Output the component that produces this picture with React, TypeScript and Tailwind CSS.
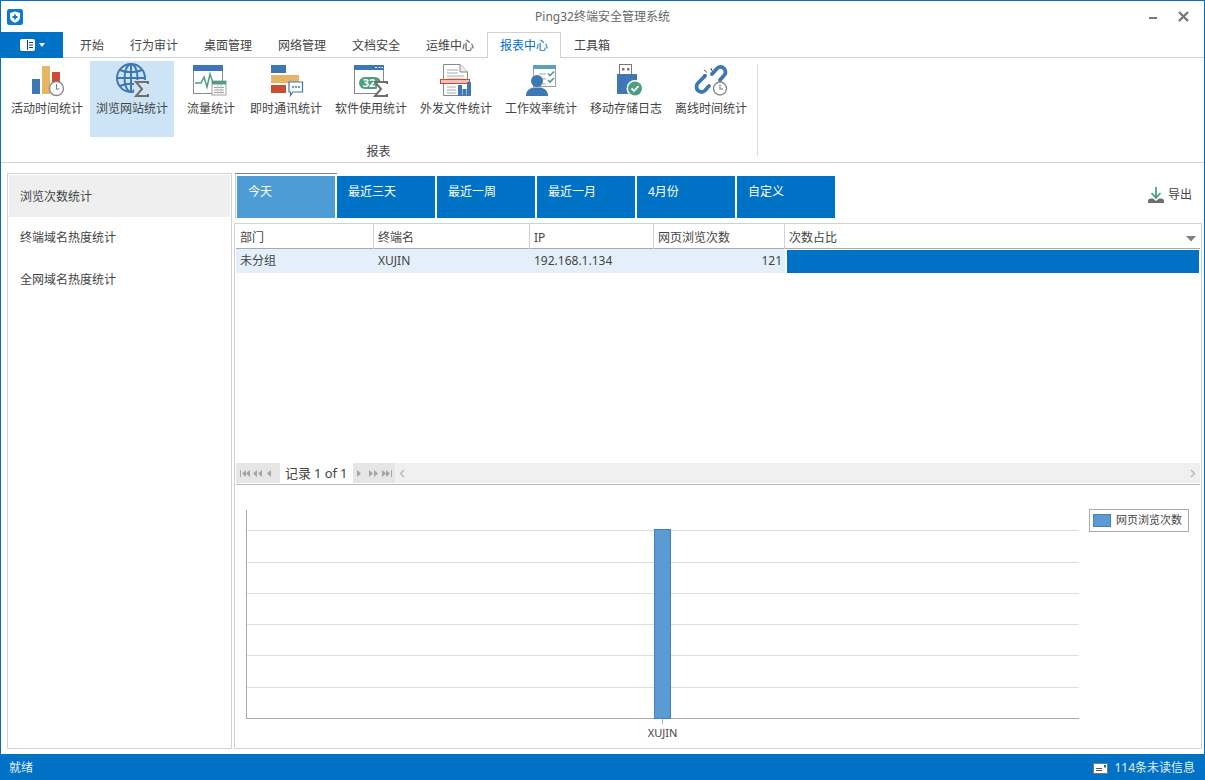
import type { ReactNode } from 'react'

const FONT = "font-['Noto_Sans','Noto_Sans_CJK_SC',sans-serif]"

const menuTabs = [
  { label: '开始', width: 'w-[50px]' },
  { label: '行为审计', width: 'w-[74px]' },
  { label: '桌面管理', width: 'w-[74px]' },
  { label: '网络管理', width: 'w-[74px]' },
  { label: '文档安全', width: 'w-[74px]' },
  { label: '运维中心', width: 'w-[74px]' }
]

function Sigma({ x, y }: { x: number; y: number }): React.JSX.Element {
  return (
    <path
      d={`M${x + 12} ${y + 2}V${y}H${x}L${x + 6} ${y + 7}L${x} ${y + 14}H${x + 12}V${y + 12}`}
      fill="none"
      stroke="#6e6e6e"
      strokeWidth="2"
    />
  )
}

function Clock({ cx, cy, r }: { cx: number; cy: number; r: number }): React.JSX.Element {
  return (
    <g>
      <circle cx={cx} cy={cy} r={r} fill="#fff" stroke="#8a8a8a" strokeWidth="1.4" />
      <path d={`M${cx} ${cy - r + 2.5}V${cy + 0.5}H${cx + 3}`} fill="none" stroke="#6e7f8f" strokeWidth="1.1" />
    </g>
  )
}

const icons: Record<string, ReactNode> = {
  activity: (
    <>
      <rect x="5" y="16" width="8" height="15" fill="#3d78b4" />
      <rect x="15" y="3" width="8" height="28" fill="#e8b565" />
      <rect x="25" y="9" width="8" height="14" fill="#cb4c30" />
      <Clock cx={29.5} cy={25.5} r={7} />
    </>
  ),
  browse: (
    <>
      <circle cx="19" cy="15" r="14" fill="none" stroke="#3d78b4" strokeWidth="2" />
      <ellipse cx="19" cy="15" rx="6.5" ry="14" fill="none" stroke="#3d78b4" strokeWidth="2" />
      <path d="M19 1V29M5 15H33" stroke="#3d78b4" strokeWidth="2" />
      <path d="M8 7C14 10 24 10 30 7M8 23C14 20 24 20 30 23" fill="none" stroke="#3d78b4" strokeWidth="2" />
      <rect x="22" y="17" width="17" height="18" fill="#cde4f7" />
      <Sigma x={24} y={19} />
    </>
  ),
  traffic: (
    <>
      <rect x="2.5" y="2.5" width="29" height="28" fill="#fff" stroke="#8a8a8a" />
      <rect x="2" y="2" width="30" height="6" fill="#3d78b4" />
      <path d="M4 20H10L13 14L16 24L19 11L22 20H26" fill="none" stroke="#4f9e83" strokeWidth="1.5" />
      <rect x="21" y="18" width="14" height="14" fill="#fff" stroke="#a0a0a0" />
      <rect x="21" y="18" width="14" height="3.5" fill="#4f9e83" />
      <path d="M23 24.5H33M23 27H33M23 29.5H33" stroke="#a0a0a0" />
      <path d="M26.5 22V31M30 22V31" stroke="#c8c8c8" />
    </>
  ),
  im: (
    <>
      <rect x="5" y="2" width="15" height="8" fill="#3d78b4" />
      <rect x="5" y="12" width="28" height="8" fill="#e8b565" />
      <rect x="5" y="22" width="15" height="8" fill="#cb4c30" />
      <path d="M23 19H36.5V29H27L24.5 32.5V29H23Z" fill="#fff" stroke="#3d78b4" strokeWidth="1.2" />
      <path d="M26 24H28M29 24H31M32 24H34" stroke="#3d78b4" strokeWidth="1.6" />
    </>
  ),
  software: (
    <>
      <rect x="3.5" y="2.5" width="29" height="28" fill="#fff" stroke="#8a8a8a" />
      <rect x="3" y="2" width="30" height="5" fill="#3d78b4" />
      <path d="M24 4.500H26M27.500 4.500H29.500M30.500 4.500H32" stroke="#fff" />
      <rect x="8" y="14" width="22" height="12" rx="6" fill="#4f9e83" />
      <text x="18" y="24" textAnchor="middle" fontSize="11" fontWeight="700" fill="#fff">32</text>
      <rect x="26" y="19" width="12" height="15" fill="#fff" />
      <path d="M24 19H25V21H24Z" fill="#fff" />
      <Sigma x={24} y={19} />
    </>
  ),
  outgoing: (
    <>
      <path d="M7.500 1.500H24L31.500 9V32.500H7.500Z" fill="#fff" stroke="#8a8a8a" />
      <path d="M24 1.500V9H31.500" fill="#eee" stroke="#8a8a8a" />
      <path d="M11 7H22M11 10H22M11 13H28M11 16H28M11 24H20M11 27H20M11 30H20" stroke="#a8a8a8" />
      <rect x="4.500" y="16.500" width="29" height="4" fill="#f3bcbc" stroke="#cb4c30" />
      <rect x="22" y="22" width="4" height="11" fill="#3d78b4" />
      <rect x="31" y="19" width="4" height="14" fill="#3d78b4" />
      <rect x="26.500" y="26" width="4" height="7" fill="#3d78b4" />
    </>
  ),
  efficiency: (
    <>
      <rect x="12.500" y="2.500" width="22" height="21" fill="#fff" stroke="#a0a0a0" />
      <rect x="12" y="2" width="23" height="4" fill="#5aa0bf" />
      <path d="M18 11H25M18 16H25M18 21H25" stroke="#a8a8a8" />
      <path d="M27 10.500L29 12.500L33 8.500M27 17L29 19L33 15" fill="none" stroke="#4f9e83" strokeWidth="1.6" />
      <circle cx="16" cy="18" r="6" fill="#3d78b4" />
      <path d="M5 33C5 27 9 25.500 12 24.500H20C23 25.500 27 27 27 33Z" fill="#3d78b4" />
    </>
  ),
  usb: (
    <>
      <rect x="13.500" y="1.500" width="12" height="10" fill="#fff" stroke="#777" />
      <rect x="16" y="5" width="2.500" height="2.500" fill="#777" />
      <rect x="21" y="5" width="2.500" height="2.500" fill="#777" />
      <rect x="11" y="11" width="20" height="20" fill="#3d78b4" />
      <circle cx="29" cy="25.500" r="8.500" fill="#fff" />
      <circle cx="29" cy="25.500" r="7" fill="#4f9e83" />
      <path d="M25.500 25.500L28 28L32.500 23" fill="none" stroke="#fff" strokeWidth="1.800" />
    </>
  ),
  offline: (
    <>
      <path
        d="M21 11L26 5.500C28 3.500 31 3.500 33 5.500C35 7.500 35 10.500 33 12.500L29 17"
        fill="none"
        stroke="#3d78b4"
        strokeWidth="3.800"
        strokeLinecap="round"
      />
      <path
        d="M14 13L7 20C5 22 5 25.500 7 27.500C9 29.500 12 29.500 14 27.500L18 23"
        fill="none"
        stroke="#3d78b4"
        strokeWidth="3.800"
        strokeLinecap="round"
      />
      <path d="M20 5L21 8M13 7L16 9.500M12 12H15.500" stroke="#555" />
      <Clock cx={29} cy={25.500} r={6.500} />
    </>
  )
}

const ribbonItems = [
  { label: '活动时间统计', icon: 'activity', box: 'w-[84px] mr-[1px]' },
  { label: '浏览网站统计', icon: 'browse', box: 'w-[84px] mr-[1px] bg-[#cde4f7]' },
  { label: '流量统计', icon: 'traffic', box: 'w-[69px] pl-[3px]' },
  { label: '即时通讯统计', icon: 'im', box: 'w-[84px] mr-[1px]' },
  { label: '软件使用统计', icon: 'software', box: 'w-[84px] mr-[1px]' },
  { label: '外发文件统计', icon: 'outgoing', box: 'w-[84px] mr-[1px]' },
  { label: '工作效率统计', icon: 'efficiency', box: 'w-[84px] mr-[1px]' },
  { label: '移动存储日志', icon: 'usb', box: 'w-[84px] mr-[1px]' },
  { label: '离线时间统计', icon: 'offline', box: 'w-[84px] mr-[1px]' }
]

const rangeTabs = ['最近三天', '最近一周', '最近一月', '4月份', '自定义']
const tableColumns = 'grid grid-cols-[138px_156px_124px_131px_1fr]'

function PagerGlyph({ kind }: { kind: 'first' | 'prev2' | 'prev' | 'next' | 'next2' | 'last' }): React.JSX.Element {
  const shape: Record<string, string> = {
    first: 'M1 1V8H2V1ZM7 1L3 4.500L7 8ZM11 1L7 4.500L11 8Z',
    prev2: 'M5 1L1 4.500L5 8ZM10 1L6 4.500L10 8Z',
    prev: 'M6 1L2 4.500L6 8Z',
    next: 'M2 1L6 4.500L2 8Z',
    next2: 'M1 1L5 4.500L1 8ZM6 1L10 4.500L6 8Z',
    last: 'M1 1L5 4.500L1 8ZM5 1L9 4.500L5 8ZM10 1V8H11V1Z'
  }
  return (
    <svg width="12" height="9" viewBox="0 0 12 9" className="shrink-0">
      <path d={shape[kind]} fill="#a4a4a4" />
    </svg>
  )
}

export default function App(): React.JSX.Element {
  return (
    <div className={`${FONT} w-[1205px] h-[780px] flex flex-col bg-white border-x border-t border-[#0072c6] text-[12px] text-[#444] overflow-hidden`}>
      {/* Title bar */}
      <div className="h-[31px] shrink-0 flex items-center">
        <div className="flex-1">
          <svg width="16" height="16" viewBox="0 0 16 16" className="mt-[1px] ml-[6px]">
            <rect width="16" height="16" rx="2.500" fill="#0f78cf" />
            <path d="M8 2.500L13 4V8.500C13 11 10.500 12.800 8 13.800C5.500 12.800 3 11 3 8.500V4Z" fill="#fff" />
            <path d="M8 5.500V10.500M5.500 8H10.500" stroke="#0f78cf" strokeWidth="1.800" />
          </svg>
        </div>
        <div className="text-[12px] text-[#666]">Ping32终端安全管理系统</div>
        <div className="flex-1 flex justify-end items-center">
          <div className="w-[8px] h-[2px] bg-[#777] mr-[21px] mt-[3px]" />
          <svg width="11" height="11" viewBox="0 0 11 11" className="mr-[15px]">
            <path d="M1 1L10 10M10 1L1 10" stroke="#777" strokeWidth="2.400" />
          </svg>
        </div>
      </div>

      {/* Menu tabs */}
      <div className="h-[26px] shrink-0 flex border-b border-[#d2d2d2]">
        <div className="w-[62px] h-[26px] bg-[#0072c6] flex items-center justify-center gap-[4px]">
          <svg width="15" height="12" viewBox="0 0 15 12">
            <rect x="0.500" y="0.500" width="14" height="11" rx="1" fill="#fff" stroke="#fff" />
            <path d="M7.500 1V11" stroke="#1f3f5f" />
            <path d="M9 3.500H13M9 6H13M9 8.500H13" stroke="#1f3f5f" />
          </svg>
          <svg width="6" height="4" viewBox="0 0 6 4">
            <path d="M0 0H6L3 4Z" fill="#fff" />
          </svg>
        </div>
        <div className="w-[4px]" />
        {menuTabs.map((tab) => (
          <div key={tab.label} className={`${tab.width} text-center leading-[27px] text-[#444]`}>
            {tab.label}
          </div>
        ))}
        <div className="w-[74px] h-[26px] text-center leading-[26px] bg-white border-x border-t border-[#d2d2d2] text-[#0072c6]">
          报表中心
        </div>
        <div className="w-[62px] text-center leading-[27px] text-[#444]">工具箱</div>
      </div>

      {/* Ribbon */}
      <div className="h-[105px] shrink-0 flex border-b border-[#d2d2d2] pl-[4px]">
        <div className="w-[752px] shrink-0 flex flex-col">
          <div className="flex mt-[3px] h-[76px]">
            {ribbonItems.map((item) => (
              <div key={item.label} className={`${item.box} h-[76px] shrink-0 flex flex-col items-center pt-[2px]`}>
                <svg width="40" height="36" viewBox="0 0 40 36" className="shrink-0">
                  {icons[item.icon]}
                </svg>
                <div className="mt-[1px] leading-[18px] whitespace-nowrap">{item.label}</div>
              </div>
            ))}
          </div>
          <div className="mt-[6px] pr-[5px] text-center leading-[18px]">报表</div>
        </div>
        <div className="w-px h-[92px] mt-[6px] bg-[#dcdcdc]" />
      </div>

      {/* Main */}
      <div className="flex-1 min-h-0 flex pl-[6px] pr-[2px] pt-[10px] pb-[5px]">
        <div className="w-[225px] shrink-0 border border-[#d2d2d2] p-[1px]">
          <div className="h-[42px] bg-[#efefef] pl-[11px] leading-[43px]">浏览次数统计</div>
          <div className="h-[42px] pl-[11px] leading-[42px]">终端域名热度统计</div>
          <div className="h-[42px] pl-[11px] leading-[42px]">全网域名热度统计</div>
        </div>

        <div className="flex-1 min-w-0 ml-[2px] flex flex-col">
          <div className="h-[50px] shrink-0 flex items-start pl-[1px]">
            <div className="w-[102px] h-[45px] border-t border-l border-t-[#808080] border-l-[#c8c8c8] pl-[1px] pt-[2px]">
              <div className="w-[98px] h-[42px] bg-[#4d9cd6] text-white pl-[11px] leading-[32px]">今天</div>
            </div>
            {rangeTabs.map((tab) => (
              <div key={tab} className="w-[98px] h-[42px] mt-[3px] mr-[2px] bg-[#0072c6] text-white pl-[11px] leading-[32px]">
                {tab}
              </div>
            ))}
            <div className="ml-auto mt-[13px] mr-[10px] flex items-center gap-[4px] h-[18px]">
              <svg width="16" height="16" viewBox="0 0 16 16">
                <path d="M8 0V10M3.500 6L8 11L12.500 6" fill="none" stroke="#4f9e83" strokeWidth="1.800" />
                <path d="M0 16V14C0 12.500 1 11.500 3 11.500H5L8 14L11 11.500H13C15 11.500 16 12.500 16 14V16Z" fill="#6e6e6e" />
              </svg>
              <span>导出</span>
            </div>
          </div>

          <div className="flex-1 min-h-0 border border-[#d2d2d2] flex flex-col pl-[1px] pr-[1px]">
            <div className={`${tableColumns} h-[25px] shrink-0 border-b border-[#aaa]`}>
              <div className="pl-[4px] leading-[27px] border-r border-[#d2d2d2]">部门</div>
              <div className="pl-[4px] leading-[27px] border-r border-[#d2d2d2]">终端名</div>
              <div className="pl-[4px] leading-[27px] border-r border-[#d2d2d2]">IP</div>
              <div className="pl-[4px] leading-[27px] border-r border-[#d2d2d2]">网页浏览次数</div>
              <div className="pl-[4px] pr-[4px] flex items-center justify-between">
                <span className="leading-[27px]">次数占比</span>
                <svg width="10" height="6" viewBox="0 0 10 6" className="mt-[2px]">
                  <path d="M0 0H10L5 5.500Z" fill="#808080" />
                </svg>
              </div>
            </div>
            <div className={`${tableColumns} h-[24px] shrink-0`}>
              <div className="pl-[4px] leading-[24px] bg-[#e3f0fb]">未分组</div>
              <div className="pl-[4px] leading-[24px] bg-[#e3f0fb]">XUJIN</div>
              <div className="pl-[4px] leading-[24px] bg-[#e3f0fb]">192.168.1.134</div>
              <div className="pr-[3px] text-right leading-[24px] bg-[#e3f0fb]">121</div>
              <div className="pl-[2px] pr-[1px] pt-[1px]">
                <div className="h-[23px] bg-[#0072c6]" />
              </div>
            </div>
            <div className="flex-1" />

            {/* Pager */}
            <div className="h-[22px] shrink-0 flex border-b border-[#bbb]">
              <div className="h-[20px] w-[44px] bg-[#e6e6e6] flex items-center justify-between px-[3px]">
                <PagerGlyph kind="first" />
                <PagerGlyph kind="prev2" />
                <PagerGlyph kind="prev" />
              </div>
              <div className="w-[73px] h-[20px] pl-[5px] leading-[20px] text-[13px] whitespace-nowrap tracking-[-0.1px]">记录 1 of 1</div>
              <div className="h-[20px] w-[42px] bg-[#e6e6e6] flex items-center justify-between px-[2px]">
                <PagerGlyph kind="next" />
                <PagerGlyph kind="next2" />
                <PagerGlyph kind="last" />
              </div>
              <div className="flex-1 h-[20px] bg-[#f0f0f0] flex items-center justify-between px-[4px]">
                <svg width="6" height="9" viewBox="0 0 6 9">
                  <path d="M5 1L1.500 4.500L5 8" fill="none" stroke="#b4b4b4" strokeWidth="1.300" />
                </svg>
                <svg width="6" height="9" viewBox="0 0 6 9">
                  <path d="M1 1L4.500 4.500L1 8" fill="none" stroke="#b4b4b4" strokeWidth="1.300" />
                </svg>
              </div>
            </div>

            {/* Chart */}
            <div className="h-[263px] shrink-0 flex">
              <svg width="853" height="263" viewBox="0 0 853 263" className="shrink-0">
                {[45.5, 77.5, 108.5, 139.5, 170.5, 202.5].map((y) => (
                  <line key={y} x1="11" y1={y} x2="843" y2={y} stroke="#dedede" />
                ))}
                <line x1="10.500" y1="25" x2="10.500" y2="234" stroke="#aaa" />
                <line x1="10" y1="233.500" x2="843" y2="233.500" stroke="#aaa" />
                <line x1="426.500" y1="234" x2="426.500" y2="239" stroke="#aaa" />
                <rect x="418.500" y="44.500" width="16" height="189" fill="#5b9bd5" stroke="#4a7fb8" />
                <text x="426.500" y="252" textAnchor="middle" fontSize="11" fill="#444">XUJIN</text>
              </svg>
              <div className="mt-[24px] w-[100px] h-[23px] border border-[#aaa] flex items-center pl-[3px] gap-[5px]">
                <div className="w-[18px] h-[13px] bg-[#5b9bd5] border border-[#4a7fb8] shrink-0" />
                <span className="text-[11px] whitespace-nowrap">网页浏览次数</span>
              </div>
            </div>
          </div>
        </div>
      </div>

      {/* Status bar */}
      <div className="h-[26px] shrink-0 bg-[#0072c6] text-[#e4f0fa] flex items-center pl-[8px] pr-[9px] pt-[2px]">
        <span>就绪</span>
        <div className="ml-auto flex items-center gap-[6px]">
          <svg width="15" height="11" viewBox="0 0 15 11">
            <rect x="0.500" y="0.500" width="14" height="10" fill="#fff" stroke="#777" />
            <path d="M3 5.500H9M3 7.500H9" stroke="#555" />
            <rect x="11" y="2" width="2" height="2.500" fill="#0072c6" />
          </svg>
          <span>114条未读信息</span>
        </div>
      </div>
    </div>
  )
}
